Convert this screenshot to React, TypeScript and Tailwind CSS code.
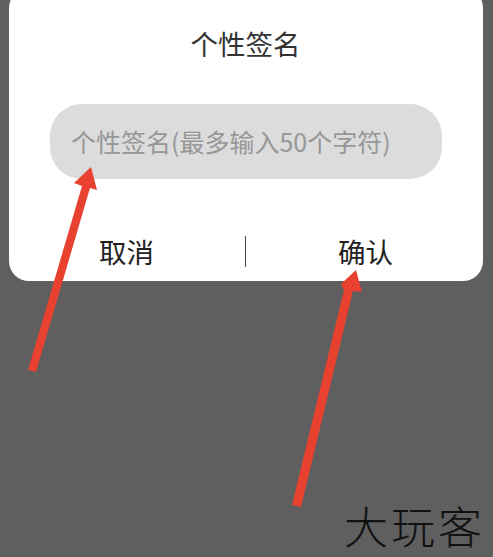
export default function App() {
  const font = { fontFamily: '"Noto Sans CJK SC", "Liberation Sans", sans-serif' };
  return (
    <div className="relative h-[557px] w-[493px] overflow-hidden bg-[#5f5f5f]" style={font}>
      <div className="ml-[9px] mt-[-12px] flex h-[293px] w-[474px] flex-col items-center rounded-[20px] bg-white">
        <div className="mt-[35px] text-[27.5px] leading-[40px] text-[#333333] pr-[1px]">个性签名</div>
        <div className="mt-[41px] flex h-[75px] w-[392px] items-center rounded-[32px] bg-[#dcdcdc] pb-[2px] pl-[21px]">
          <span className="text-[25px] leading-[32px] text-[#979797]">个性签名(最多输入50个字符)</span>
        </div>
        <div className="mt-[54px] flex w-full items-center text-[27.5px] leading-[36px] text-[#222222]">
          <div className="flex flex-1 justify-start pl-[90px]">取消</div>
          <div className="mr-[2px] h-[31px] w-[1px] bg-[#444444]" />
          <div className="flex flex-1 justify-end pr-[90px]">确认</div>
        </div>
      </div>

      <svg className="absolute left-0 top-0" width="493" height="557" viewBox="0 0 493 557">
        <polygon fill="#e8412f" points="28,370 82,186 74,183 91,167 97,190 90,188 36,372" />
        <polygon fill="#e8412f" points="292,505 344,290 341,284 356,270 362,292 353,291 301,507" />
      </svg>

      <div className="absolute left-[344px] top-[502px] text-[44px] font-light leading-[46px] tracking-[3px] text-[#111111] whitespace-nowrap">
        大玩客
      </div>
    </div>
  );
}
